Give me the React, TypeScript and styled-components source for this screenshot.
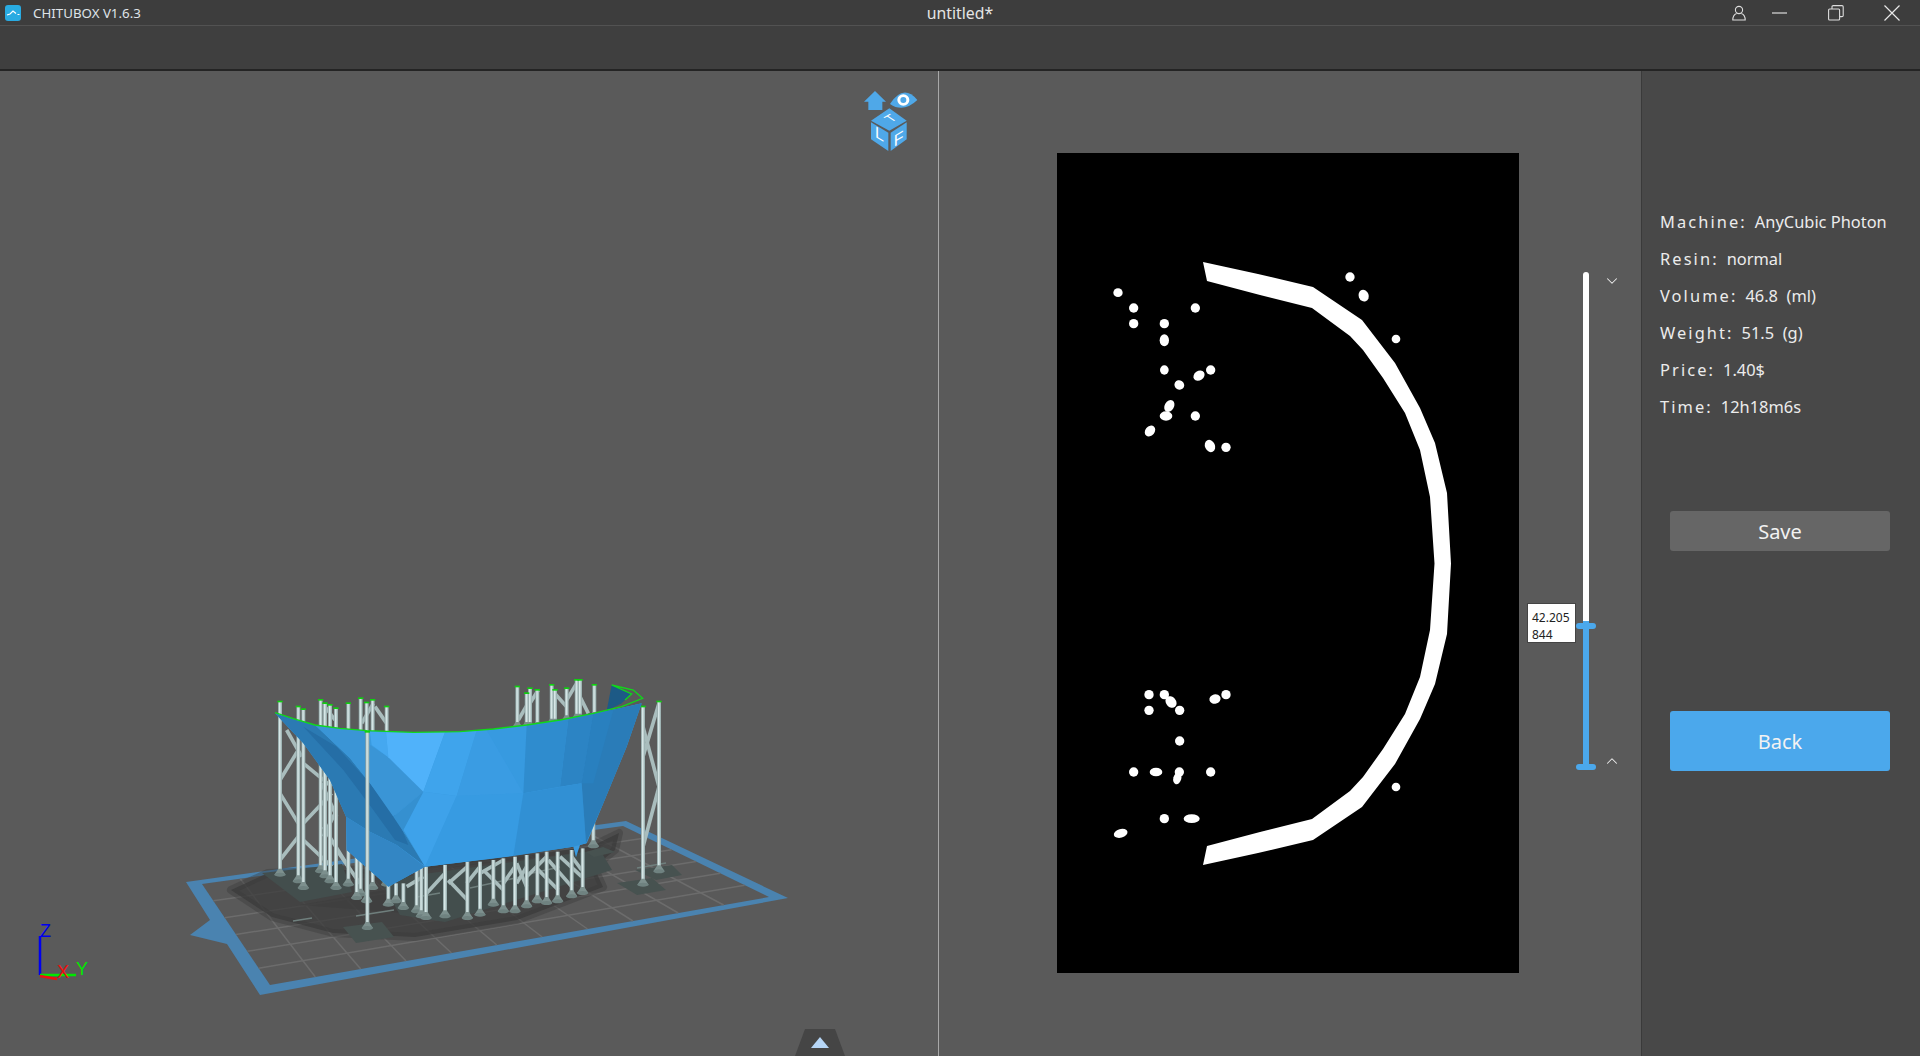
import React from "react";
import styled, { createGlobalStyle } from "styled-components";
import { ChevronDown, ChevronUp } from "lucide-react";

const Global = createGlobalStyle`
  html, body { margin: 0; padding: 0; height: 100%; background: #5a5a5a; overflow: hidden; }
  #root { height: 100%; }
`;
const Shell = styled.div`
  width: 1920px; height: 1056px; display: flex; flex-direction: column;
  font-family: "Noto Sans", "Open Sans", sans-serif; color: #e8e8e8; overflow: hidden;
`;
const TitleBar = styled.header`
  height: 25px; flex: none; background: #3d3d3d; border-bottom: 1px solid #525252;
  display: grid; grid-template-columns: 1fr auto 1fr; align-items: center;
`;
const Brand = styled.div`display: flex; align-items: center; gap: 12px; padding-left: 5px; font-size: 13.3px; color: #dfe3e8;`;
const DocTitle = styled.div`font-size: 15.8px; color: #e4e4e4;`;
const WindowControls = styled.div`display: flex; justify-content: flex-end; align-items: center;`;
const Ctl = styled.div<{ $w: number }>`width: ${p => p.$w}px; height: 25px; display: flex; align-items: center; justify-content: center;`;
const ToolBar = styled.div`height: 43px; flex: none; background: #3f3f3f; border-bottom: 2px solid #242424;`;
const Main = styled.main`flex: 1; display: flex; min-height: 0;`;
const Viewport = styled.section`
  width: 938px; flex: none; background: #5a5a5a; border-right: 1px solid #a8a8a8; position: relative;
`;
const Scene = styled.svg`display: block; width: 938px; height: 985px;`;
const ExpandTab = styled.div`
  position: absolute; left: 795px; bottom: 0; width: 50px; height: 27px; background: #454545;
  clip-path: polygon(20% 0, 80% 0, 100% 100%, 0 100%);
  display: flex; justify-content: center; padding-top: 8px; box-sizing: border-box;
`;
const Arrow = styled.div`
  width: 0; height: 0; border-left: 9px solid transparent; border-right: 9px solid transparent;
  border-bottom: 11px solid #b6d6f6;
`;
const SlicePanel = styled.section`
  flex: 1; background: #5a5a5a; display: flex; align-items: flex-start; padding: 82px 0 0 118px;
`;
const SliceView = styled.svg`display: block; width: 462px; height: 820px; background: #000; flex: none;`;
const SliderRow = styled.div`display: flex; margin: 119px 0 0 57px; height: 498px; gap: 7px;`;
const Slider = styled.div`position: relative; width: 20px; height: 100%; display: flex; justify-content: center;`;
const Track = styled.div`width: 6px; height: 100%; display: flex; flex-direction: column; border-radius: 3px 3px 0 0; overflow: hidden;`;
const TrackTop = styled.div`height: 70%; background: #fff;`;
const TrackFill = styled.div`flex: 1; background: #4ba8ec;`;
const Handle = styled.div<{ $top: number }>`
  position: absolute; left: 0; top: ${p => p.$top}px; width: 20px; height: 6px; border-radius: 3px; background: #4ba8ec;
`;
const Tip = styled.div`
  position: absolute; left: -49px; top: 331px; width: 49px; height: 40px; box-sizing: border-box;
  background: #fff; border: 1px solid #444; color: #222; font-size: 12px; line-height: 17px; padding: 5px 0 0 4px;
`;
const Chevrons = styled.div`display: flex; flex-direction: column; justify-content: space-between; height: 498px; color: #eee;
  svg { display: block; }
`;
const SidePanel = styled.aside`
  width: 279px; flex: none; background: #484848; border-left: 1px solid #3a3a3a; padding: 132px 0 0 18px; box-sizing: border-box;
`;
const InfoRow = styled.div`height: 37px; line-height: 37px; font-size: 16.4px; color: #ececec; white-space: pre;`;
const Label = styled.span`letter-spacing: 2.1px; margin-right: 8px;`;
const ActionButton = styled.button<{ $primary?: boolean }>`
  display: block; margin-left: 10px; width: 220px; border: 0; border-radius: 3px; font-family: inherit; color: #f2f2f2;
  font-size: 20px;
  height: ${p => (p.$primary ? 60 : 40)}px;
  margin-top: ${p => (p.$primary ? 160 : 86)}px;
  background: ${p => (p.$primary ? "#4ba8ec" : "#666666")};
`;

type Pole = [number, number, number];
const backPoles: Pole[] = [
  [60,95,610],[115,110,630],[130,118,650],[182,90,600],[195,100,615],[210,105,630],[228,115,650],[265,100,640],[302,85,670],[320,98,690],[338,90,650],[380,110,640],
  [290,560,680],[385,640,700],[408,640,690],[430,640,710],[470,590,720],[484,590,735],[498,590,740],[555,585,735],[622,575,740],[660,575,730],[700,570,700],[730,565,720],[765,560,720],[800,555,705],[832,550,690],[860,545,695],[893,545,690],[935,540,675],[968,535,665],[1000,460,525],
  [772,50,170],[800,70,170],[810,55,170],[832,60,170],[875,45,160],[885,60,160],[920,55,150],[950,30,145],[960,30,145],[1003,45,140],
  [1149,110,640],[1197,95,600],
];
const braces: number[][] = [
  [60,330,115,240],[60,370,115,460],[60,570,115,500],[130,280,215,350],[130,460,215,370],[130,510,215,590],[190,470,265,590],[230,540,300,640],[80,180,125,260],[185,340,230,440],[190,500,225,430],
  [500,670,555,610],[565,630,622,690],[620,640,660,590],[660,610,730,570],[670,600,730,660],[770,580,800,650],[800,620,860,560],[865,570,935,650],[900,560,965,620],[935,560,965,600],[565,640,622,590],[730,640,765,590],[825,590,895,660],[770,640,800,590],[440,650,490,620],
  [810,100,835,60],[875,60,920,110],[920,90,950,40],[950,60,985,130],[195,110,225,150],[305,160,340,100],[345,110,380,160],[775,150,810,90],
  [1149,170,1197,350],[1197,350,1149,530],[1197,100,1149,260],
];
const facets: [string, string][] = [
  ["45,130 100,148 165,165 240,175 320,182 460,187 600,185 700,177 800,165 900,150 1000,130 1080,115 1145,100 1100,230 1030,400 980,520 960,525 948,562 940,530 700,565 495,590 385,650 260,540 258,440 210,330 130,220", "#3a9be0"],
  ["45,130 100,148 165,165 270,265 330,340 400,440 440,500 495,588 410,525 330,485 258,440 210,330 130,220", "#2b7ab3"],
  ["130,170 230,230 330,340 415,450 445,525 405,510 340,420 250,300", "#256ea6"],
  ["165,165 240,175 320,182 330,225 385,262 490,365 400,440 330,340 270,265", "#3a95d6"],
  ["330,185 378,187 385,262 335,225", "#45a8f0"],
  ["378,187 460,187 555,187 490,365 385,262", "#50b2fa"],
  ["555,187 600,185 650,182 590,378 490,365", "#3fa4ec"],
  ["650,182 700,177 680,180 790,370 590,378", "#3a9ce3"],
  ["680,180 800,165 790,370", "#379ae0"],
  ["800,165 900,150 925,147 900,350 790,370", "#2f8cce"],
  ["925,147 1000,130 965,340 900,350", "#2c84c4"],
  ["490,365 590,378 495,590 430,480", "#3ea2ea"],
  ["400,440 490,365 430,480 495,590 440,500", "#3590d0"],
  ["590,378 790,370 760,558 495,590", "#379be2"],
  ["790,370 965,340 978,520 940,530 760,558", "#3190d4"],
  ["1000,130 1080,115 1145,100 1100,230 1030,400 978,520 965,340", "#2a7cb8"],
  ["1000,130 1060,120 1000,340 965,340", "#2980bf"],
  ["258,440 330,485 410,525 495,590 385,650 260,540", "#3386c4"],
  ["1055,45 1115,72 1085,100 1040,122", "#1d5a86"],
];
const topDots: number[][] = [
  [84,128,14,13,0],[131,174,14,14,0],[131,221,14,14,0],[223,221,14,14,0],[316,174,14,14,0],[223,271,14,18,0],[223,360,13,14,0],[362,360,14,14,0],
  [327,377,18,14,-35],[268,405,15,14,30],[238,468,14,19,30],[228,498,19,14,0],[316,498,14,14,0],[180,543,14,18,40],[360,588,15,19,-25],[408,592,14,14,0],
  [780,81,14,14,0],[821,137,15,18,-20],[918,267,13,13,0],
];
const bottomDots: number[][] = [
  [177,74,14,14,0],[223,74,14,14,0],[243,96,15,19,-40],[408,74,14,14,0],[375,87,17,14,-15],[177,121,14,14,0],[269,121,14,14,0],[269,213,14,14,0],
  [131,306,14,14,0],[198,306,19,13,0],[268,306,14,14,0],[262,325,12,18,15],[362,306,14,14,0],[223,446,14,14,0],[305,446,24,13,0],[92,490,21,13,-15],[918,351,13,13,0],
];
const arcOuter = [[1203,262],[1258,274],[1313,287],[1362,320],[1395,363],[1420,408],[1435,443],[1447,493],[1451,563.5]];
const arcInner = [[1434.5,563.5],[1430,497],[1420,450],[1405,413],[1383,378],[1363,350],[1350,336],[1312,308],[1260,295],[1207,281]];
const mirror = (p: number[][]) => p.map(([x, y]) => [x, 1127 - y]);
const arcPts = [...arcOuter, ...mirror(arcOuter).reverse().slice(1), ...mirror(arcInner).reverse(), ...arcInner.slice(1)]
  .map(p => p.join(",")).join(" ");

const A = [202, 884], B = [623, 826], C = [769, 897], D = [270, 985];
const lerp = (a: number[], b: number[], t: number) => [a[0] + (b[0] - a[0]) * t, a[1] + (b[1] - a[1]) * t];
const gridLines: number[][] = [];
for (let i = 1; i < 11; i++) { const t = i / 11; const p = lerp(A, B, t), q = lerp(D, C, t); gridLines.push([...p, ...q]); }
for (let i = 1; i < 6; i++) { const t = i / 6; const p = lerp(A, D, t), q = lerp(B, C, t); gridLines.push([...p, ...q]); }

function PoleShape({ x, top, bottom }: { x: number; top: number; bottom: number }) {
  return (
    <g>
      <rect x={x - 6} y={top} width={12} height={bottom - top} fill="url(#pole)" />
      <polygon points={`${x - 5},${bottom - 14} ${x + 5},${bottom - 14} ${x + 17},${bottom + 4} ${x - 17},${bottom + 4}`} fill="#7d908e" />
      <ellipse cx={x} cy={bottom + 4} rx={17} ry={6} fill="#6f8280" />
    </g>
  );
}
function Cap({ x, y }: { x: number; y: number }) {
  return <rect x={x - 8} y={y - 3} width={16} height={5} fill="#10d010" />;
}

function ModelScene() {
  const tops = backPoles.filter(p => p[1] < 200);
  return (
    <Scene viewBox="0 71 938 985">
      <defs>
        <linearGradient id="pole" x1="0" x2="1" y1="0" y2="0">
          <stop offset="0" stopColor="#7f9595" />
          <stop offset="0.4" stopColor="#dcecec" />
          <stop offset="1" stopColor="#8fa6a6" />
        </linearGradient>
      </defs>
      <polygon points="186,882 626,821 788,898 260,995 227,944 190,935 210,920" fill="#4a83b0" />
      <polygon points="202,884 623,826 769,897 270,985" fill="#595959" />
      {gridLines.map((l, i) => <line key={i} x1={l[0]} y1={l[1]} x2={l[2]} y2={l[3]} stroke="#6c6c6c" strokeWidth={1.5} />)}
      <polygon points="231,890 268,873 423,867 590,847 619,833 615,850 594,867 603,887 517,920 415,937 333,933 272,917" fill="#3a3a3a" fillOpacity={0.72} stroke="#3a3a3a" strokeOpacity={0.4} strokeWidth={8} strokeLinejoin="round" />
      <polygon points="300,905 430,915 560,885 590,862 440,880" fill="#3d3d3d" fillOpacity={0.6} />
      <polygon points="262,873 342,864 352,892 300,902" fill="#434e4d" />
      <polygon points="380,880 600,850 612,870 445,922 400,915" fill="#434e4d" />
      <polygon points="343,927 382,922 394,937 356,943" fill="#475250" />
      <polygon points="617,883 652,878 666,890 637,895" fill="#475250" />
      <polygon points="635,870 672,865 682,875 656,880" fill="#475250" />
      <polygon points="586,852 603,847 615,852 594,857" fill="#475250" />
      <path d="M293 949 L312 946 M356 944 L394 938 M417 925 L440 921 M470 916 L520 905 M528 902 L560 895 M637 896 L666 891" stroke="#6f7f7d" strokeWidth="1.5" fill="none" transform="translate(0 -28)" />
      <g transform="translate(260 670) scale(0.33333)">
        {braces.map((b, i) => <line key={i} x1={b[0]} y1={b[1]} x2={b[2]} y2={b[3]} stroke="#a9bdbd" strokeWidth={11} />)}
        {backPoles.map((p, i) => <PoleShape key={i} x={p[0]} top={p[1]} bottom={p[2]} />)}
        {tops.map((p, i) => <Cap key={i} x={p[0]} y={p[1]} />)}
        {facets.map((f, i) => <polygon key={i} points={f[0]} fill={f[1]} />)}
        <polyline points="45,128 100,146 165,165 240,175 320,182 460,187 600,185 700,177 800,165 900,150 1000,130 1085,110 1148,85 1120,60 1055,45 1115,72 1095,90" fill="none" stroke="#10d81a" strokeWidth={4} />
        <PoleShape x={322} top={185} bottom={770} />
        <Cap x={322} y={186} />
      </g>
      <g>
        <line x1="40" y1="975" x2="40" y2="936" stroke="#0000ee" strokeWidth="2.5" />
        <line x1="40" y1="975" x2="76" y2="975" stroke="#00e800" strokeWidth="2.5" />
        <line x1="40" y1="976" x2="57" y2="979" stroke="#ee1010" strokeWidth="2.5" />
        <text x="40" y="937" fontSize="18" fill="#0000ee" fontFamily="Liberation Sans">Z</text>
        <text x="57" y="978" fontSize="18" fill="#ee1010" fontFamily="Liberation Sans">X</text>
        <text x="76" y="975" fontSize="18" fill="#00e800" fontFamily="Liberation Sans">Y</text>
      </g>
      <g transform="translate(840 80) scale(0.33333)" fill="#4fa8e8">
        <polygon points="148,85 200,122 148,152 93,122" />
        <polygon points="93,127 145,158 145,213 93,178" />
        <polygon points="152,158 200,127 200,178 152,213" />
        <polygon points="105,33 138,65 127,65 127,90 85,90 85,65 72,65" />
        <path d="M150 72 Q190 10 232 60 Q190 100 150 72 Z" />
        <ellipse cx="190" cy="60" rx="18" ry="17" fill="#fff" />
        <circle cx="190" cy="60" r="9" fill="#4fa8e8" />
        <text transform="matrix(.85 -.5 .85 .55 163 122)" fontSize="40" textAnchor="middle" fill="#fff" fontFamily="Liberation Sans">T</text>
        <text transform="matrix(1 .6 0 1 118 178)" fontSize="48" textAnchor="middle" fill="#fff" fontFamily="Liberation Sans">L</text>
        <text transform="matrix(1 -.6 0 1 176 192)" fontSize="48" textAnchor="middle" fill="#fff" fontFamily="Liberation Sans">F</text>
      </g>
    </Scene>
  );
}

function SliceImage() {
  return (
    <SliceView viewBox="1057 153 462 820">
      <polygon points={arcPts} fill="#fff" />
      <g transform="translate(1090 250) scale(0.33333)" fill="#fff">
        {topDots.map((d, i) => <ellipse key={i} cx={d[0]} cy={d[1]} rx={d[2]} ry={d[3]} transform={`rotate(${d[4]} ${d[0]} ${d[1]})`} />)}
      </g>
      <g transform="translate(1090 670) scale(0.33333)" fill="#fff">
        {bottomDots.map((d, i) => <ellipse key={i} cx={d[0]} cy={d[1]} rx={d[2]} ry={d[3]} transform={`rotate(${d[4]} ${d[0]} ${d[1]})`} />)}
      </g>
    </SliceView>
  );
}

const info: [string, string][] = [
  ["Machine:", "AnyCubic Photon"],
  ["Resin:", "normal"],
  ["Volume:", "46.8  (ml)"],
  ["Weight:", "51.5  (g)"],
  ["Price:", "1.40$"],
  ["Time:", "12h18m6s"],
];

export default function App() {
  return (
    <Shell>
      <Global />
      <TitleBar>
        <Brand>
          <svg width="16" height="16" viewBox="0 0 16 16">
            <rect width="16" height="16" rx="3" fill="#29abe2" />
            <path d="M2 10 L5 9 L8 6 L11 8.5 M12.5 9.5 L14.5 9.5" stroke="#fff" strokeWidth="1.2" fill="none" />
          </svg>
          CHITUBOX V1.6.3
        </Brand>
        <DocTitle>untitled*</DocTitle>
        <WindowControls>
          <Ctl $w={26}>
            <svg width="14" height="16" viewBox="0 0 14 16" fill="none" stroke="#ddd" strokeWidth="1.1">
              <circle cx="7" cy="5" r="3.6" />
              <path d="M4.6 8.4 C1.5 9.5 .8 12 .8 15 H13.2 C13.2 12 12.5 9.5 9.4 8.4" />
            </svg>
          </Ctl>
          <Ctl $w={56}>
            <svg width="16" height="2" viewBox="0 0 16 2"><line x1="0" y1="1" x2="15" y2="1" stroke="#ddd" strokeWidth="1.2" /></svg>
          </Ctl>
          <Ctl $w={56}>
            <svg width="16" height="16" viewBox="0 0 16 16" fill="none" stroke="#ddd" strokeWidth="1.1">
              <rect x=".6" y="4" width="11" height="11" rx="1" />
              <path d="M4 4 V1.8 Q4 .6 5.2 .6 H14 Q15.2 .6 15.2 1.8 V10.5 Q15.2 11.6 14 11.6 H11.6" />
            </svg>
          </Ctl>
          <Ctl $w={56}>
            <svg width="16" height="16" viewBox="0 0 16 16" stroke="#e8e8e8" strokeWidth="1.2"><path d="M.5 .5 L15.5 15.5 M15.5 .5 L.5 15.5" /></svg>
          </Ctl>
        </WindowControls>
      </TitleBar>
      <ToolBar />
      <Main>
        <Viewport>
          <ModelScene />
          <ExpandTab><Arrow /></ExpandTab>
        </Viewport>
        <SlicePanel>
          <SliceImage />
          <SliderRow>
            <Slider>
              <Track>
                <TrackTop />
                <TrackFill />
              </Track>
              <Handle $top={351} />
              <Handle $top={492} />
              <Tip>42.205<br />844</Tip>
            </Slider>
            <Chevrons>
              <ChevronDown size={18} strokeWidth={1.4} />
              <ChevronUp size={18} strokeWidth={1.4} />
            </Chevrons>
          </SliderRow>
        </SlicePanel>
        <SidePanel>
          {info.map(([k, v]) => (
            <InfoRow key={k}><Label>{k}</Label>{v}</InfoRow>
          ))}
          <ActionButton>Save</ActionButton>
          <ActionButton $primary>Back</ActionButton>
        </SidePanel>
      </Main>
    </Shell>
  );
}
